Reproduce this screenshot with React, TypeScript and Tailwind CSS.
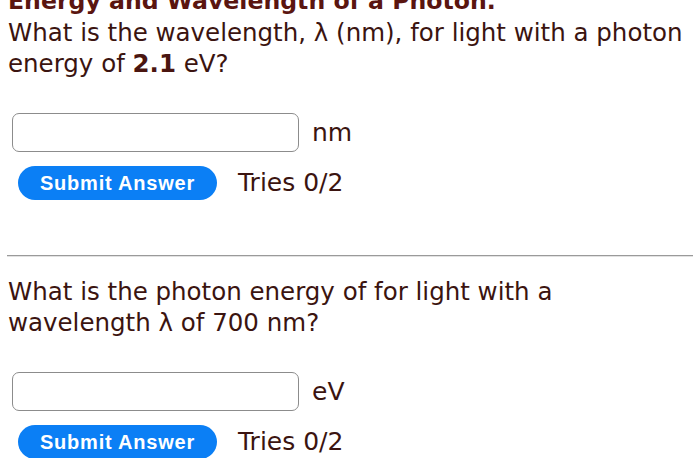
import type { FC } from 'react';

const font = { fontFamily: '"DejaVu Sans", "Liberation Sans", sans-serif' };

const AnswerRow: FC<{ unit: string }> = ({ unit }) => (
  <>
    <div className="flex items-center ml-[12px] mt-[34px] h-[39px]">
      <input
        type="text"
        className="w-[287px] h-[39px] rounded-[7px] border-[1.5px] border-[#8c8c8c] bg-white outline-none"
      />
      <span className="ml-[13px] text-[25px] text-[#3b1410]">{unit}</span>
    </div>
    <div className="flex items-center ml-[18px] mt-[14px] h-[34px]">
      <button className="w-[199px] h-[34px] rounded-full bg-[#0b7ff5] text-white text-[20px] tracking-[0.8px] font-bold font-['Liberation_Sans',sans-serif]">
        Submit Answer
      </button>
      <span className="ml-[21px] text-[25px] text-[#3b1410]">Tries 0/2</span>
    </div>
  </>
);

export default function App() {
  return (
    <div className="w-[700px] h-[458px] overflow-hidden bg-white" style={font}>
      <div className="px-[8px]">
        <h2 className="-mt-[14px] text-[23.6px] leading-[31px] font-bold text-[#5a1510] whitespace-nowrap">
          Energy and Wavelength of a Photon.
        </h2>
        <p className="text-[24.5px] leading-[31px] text-[#3b1410] whitespace-nowrap">
          What is the wavelength, λ (nm), for light with a photon
          <br />
          energy of <b className="text-[#4a1510]">2.1</b> eV?
        </p>
      </div>
      <AnswerRow unit="nm" />
      <hr className="mt-[55px] mx-[7px] border-0 h-[2px] bg-[#9a9a9a] border-b border-[#e2e2e2]" />
      <p className="px-[8px] mt-[19px] text-[24.5px] leading-[31px] text-[#3b1410] whitespace-nowrap">
        What is the photon energy of for light with a
        <br />
        wavelength λ of 700 nm?
      </p>
      <AnswerRow unit="eV" />
    </div>
  );
}
